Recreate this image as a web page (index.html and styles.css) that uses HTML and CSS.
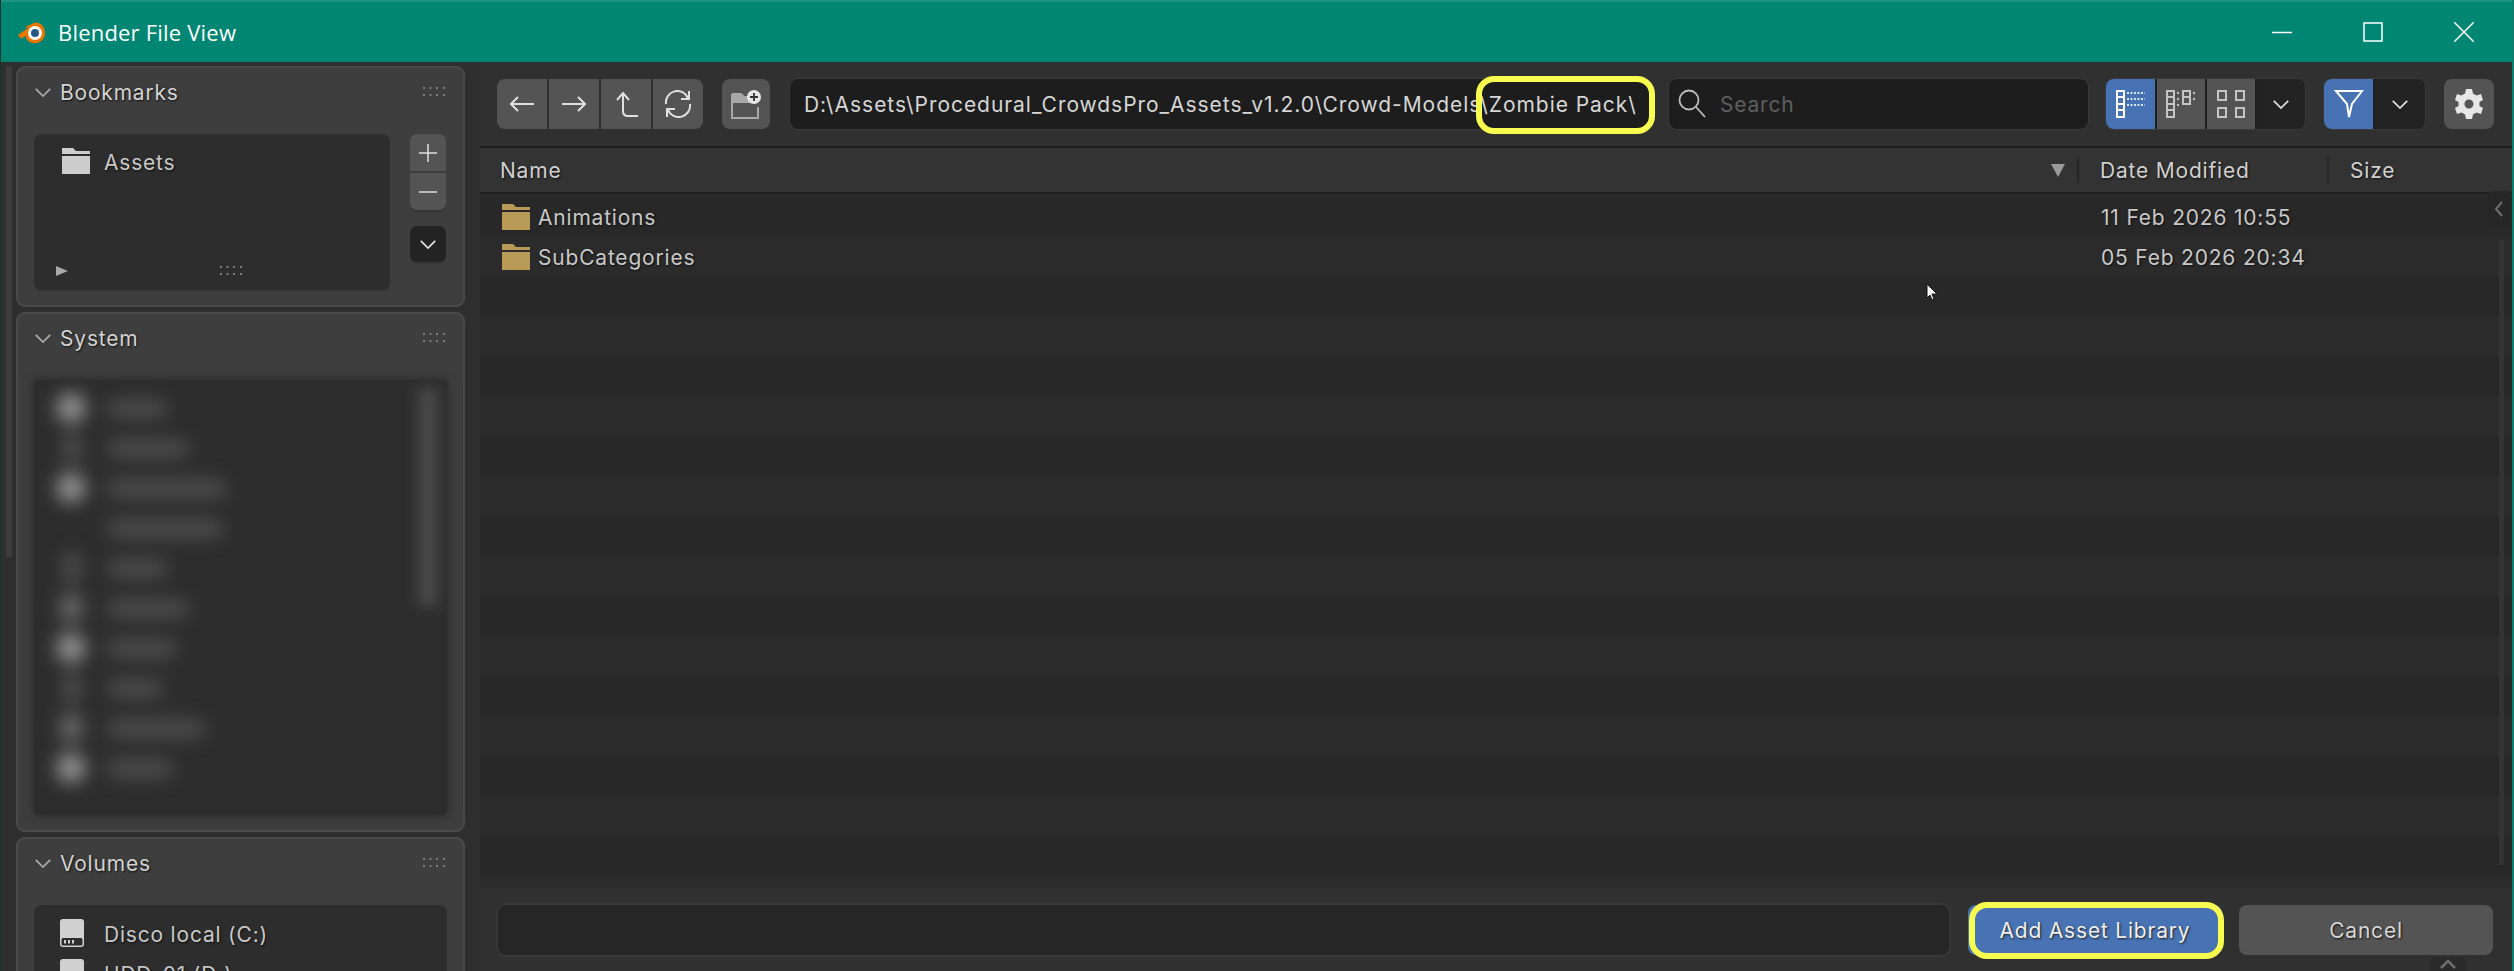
FILE: index.html
```html
<!DOCTYPE html>
<html lang="en">
<head>
<meta charset="utf-8">
<title>Blender File View</title>
<link rel="stylesheet" href="styles.css">
</head>
<body>
<svg class="sprites" width="0" height="0" aria-hidden="true">
  <symbol id="grip" viewBox="0 0 22 10"><g fill="#7c7c7c"><rect x="0" y="0" width="2" height="2"/><rect x="6.5" y="0" width="2" height="2"/><rect x="13" y="0" width="2" height="2"/><rect x="20" y="0" width="2" height="2"/><rect x="0" y="7" width="2" height="2"/><rect x="6.5" y="7" width="2" height="2"/><rect x="13" y="7" width="2" height="2"/><rect x="20" y="7" width="2" height="2"/></g></symbol>
  <symbol id="folder" viewBox="0 0 28 26"><path d="M0 0H11L14 3H28V6H0ZM0 8H28V26H0Z"/></symbol>
  <symbol id="chev" viewBox="0 0 20 12"><path d="M2 2L10 10L18 2" fill="none" stroke="currentColor" stroke-width="2"/></symbol>
</svg>
<div class="window">
  <header class="titlebar">
    <svg class="logo" viewBox="0 0 30 26" width="30" height="26">
      <path d="M1 16L11 9L8 8L17 4C23 2 28 8 28 14C28 21 22 25 16 24C12 23.500 9 21 9 17L4 19.500Z" fill="#ea7600"/>
      <circle cx="18" cy="14" r="7" fill="#fff"/>
      <circle cx="18" cy="14" r="4" fill="#265787"/>
    </svg>
    <span class="title">Blender File View</span>
    <div class="winctl">
      <svg viewBox="0 0 20 20" width="20" height="20"><path d="M0 10.500H20" stroke="#fff" stroke-width="1.500"/></svg>
      <svg viewBox="0 0 20 20" width="20" height="20"><rect x="1" y="1" width="18" height="18" fill="none" stroke="#fff" stroke-width="1.500"/></svg>
      <svg viewBox="0 0 20 20" width="20" height="20"><path d="M0 0L20 20M20 0L0 20" stroke="#fff" stroke-width="1.500"/></svg>
    </div>
  </header>
  <div class="content">
    <aside class="sidebar">
      <div class="side-scroll"></div>
      <section class="panel">
        <div class="panel-head">
          <svg class="p-chev"><use href="#chev"/></svg>
          <span class="panel-title">Bookmarks</span>
          <svg class="grip"><use href="#grip"/></svg>
        </div>
        <div class="book-body">
          <div class="list book-list">
            <div class="side-row">
              <svg class="side-folder"><use href="#folder"/></svg>
              <span>Assets</span>
            </div>
            <div class="book-foot">
              <svg class="tri" viewBox="0 0 12 10" width="12" height="10"><path d="M0 0L12 5L0 10Z" fill="#a8a8a8"/></svg>
              <svg class="grip"><use href="#grip"/></svg>
            </div>
          </div>
          <div class="book-side">
            <div class="pm">
              <button class="pm-btn"><svg viewBox="0 0 18 18" width="18" height="18"><path d="M9 0V18M0 9H18" stroke="#e0e0e0" stroke-width="1.500"/></svg></button>
              <button class="pm-btn"><svg viewBox="0 0 18 18" width="18" height="18"><path d="M0 9H18" stroke="#e0e0e0" stroke-width="1.500"/></svg></button>
            </div>
            <button class="pm-drop"><svg class="m-chev"><use href="#chev"/></svg></button>
          </div>
        </div>
      </section>
      <section class="panel">
        <div class="panel-head">
          <svg class="p-chev"><use href="#chev"/></svg>
          <span class="panel-title">System</span>
          <svg class="grip"><use href="#grip"/></svg>
        </div>
        <div class="list sys-list">
          <div class="blurred">
            <div class="b-row"><i class="b-ico hi"></i><i class="b-lab w58"></i></div>
            <div class="b-row"><i class="b-ico lo"></i><i class="b-lab w80"></i></div>
            <div class="b-row"><i class="b-ico hi"></i><i class="b-lab w118"></i></div>
            <div class="b-row"><i class="b-ico none"></i><i class="b-lab w114"></i></div>
            <div class="b-row"><i class="b-ico lo"></i><i class="b-lab w58"></i></div>
            <div class="b-row"><i class="b-ico mid"></i><i class="b-lab w80"></i></div>
            <div class="b-row"><i class="b-ico hi"></i><i class="b-lab w68"></i></div>
            <div class="b-row"><i class="b-ico lo"></i><i class="b-lab w54"></i></div>
            <div class="b-row"><i class="b-ico mid"></i><i class="b-lab w96"></i></div>
            <div class="b-row"><i class="b-ico hi"></i><i class="b-lab w64"></i></div>
          </div>
          <div class="b-scroll"></div>
        </div>
      </section>
      <section class="panel">
        <div class="panel-head">
          <svg class="p-chev"><use href="#chev"/></svg>
          <span class="panel-title">Volumes</span>
          <svg class="grip"><use href="#grip"/></svg>
        </div>
        <div class="list vol-list">
          <div class="side-row">
            <svg class="disk" viewBox="0 0 24 28"><path fill-rule="evenodd" d="M3 0H21A3 3 0 0 1 24 3V25A3 3 0 0 1 21 28H3A3 3 0 0 1 0 25V3A3 3 0 0 1 3 0ZM3 19A1.500 1.500 0 0 0 1.500 20.500V25A1.500 1.500 0 0 0 3 26.500H21A1.500 1.500 0 0 0 22.500 25V20.500A1.500 1.500 0 0 0 21 19ZM4 21H6V24.500H4ZM8 21H10V24.500H8ZM12 21H14V24.500H12Z"/></svg>
            <span>Disco local (C:)</span>
          </div>
          <div class="side-row">
            <svg class="disk" viewBox="0 0 24 28"><path fill-rule="evenodd" d="M3 0H21A3 3 0 0 1 24 3V25A3 3 0 0 1 21 28H3A3 3 0 0 1 0 25V3A3 3 0 0 1 3 0Z"/></svg>
            <span>HDD-01 (D:)</span>
          </div>
        </div>
      </section>
    </aside>
    <main class="main">
      <div class="toolbar">
        <div class="nav">
          <button class="tool"><svg viewBox="0 0 26 20" width="26" height="20"><path d="M25 10H2M9 3L2 10L9 17" class="ln"/></svg></button>
          <button class="tool"><svg viewBox="0 0 26 20" width="26" height="20"><path d="M1 10H24M17 3L24 10L17 17" class="ln"/></svg></button>
          <button class="tool"><svg viewBox="0 0 24 26" width="24" height="26"><path d="M3 9L9 2L15 9M9 2V20Q9 25 14 25H24" class="ln"/></svg></button>
          <button class="tool"><svg viewBox="0 0 28 28" width="28" height="28"><path d="M2 14A11.500 11.500 0 0 1 24 8M26 14A11.500 11.500 0 0 1 4 20M25 1V9H17M3 27V19H11" class="ln"/></svg></button>
        </div>
        <button class="tool newdir"><svg viewBox="0 0 30 29" width="30" height="29"><path d="M1 4H10L13 7H22M1 4V28H27V17" fill="none" stroke="#a8a8a8" stroke-width="2"/><path d="M1 4H10L13 8H20V13H1Z" fill="#a8a8a8"/><circle cx="23" cy="7" r="7" fill="#e6e6e6"/><path d="M23 3V11M19 7H27" stroke="#333" stroke-width="1.800"/></svg></button>
        <div class="field path">
          <span>D:\Assets\Procedural_CrowdsPro_Assets_v1.2.0\Crowd-Models\Zombie Pack\</span>
          <div class="mark mark-path"></div>
        </div>
        <div class="field search">
          <svg viewBox="0 0 28 30" width="28" height="30"><circle cx="11" cy="11" r="9.500" fill="none" stroke="#bdbdbd" stroke-width="1.800"/><path d="M18 18L27 28" stroke="#bdbdbd" stroke-width="1.800"/></svg>
          <span>Search</span>
        </div>
        <div class="group view">
          <button class="seg seg-on"><svg viewBox="0 0 30 28" width="30" height="28"><g fill="none" stroke="#fff" stroke-width="2"><rect x="1" y="1" width="7" height="6"/><rect x="1" y="7" width="7" height="7"/><rect x="1" y="14" width="7" height="6"/><rect x="1" y="20" width="7" height="7"/></g><path d="M11 3H29M11 9H29M11 15H29" stroke="#dbe5f4" stroke-width="2" stroke-dasharray="2 1.500"/></svg></button>
          <button class="seg"><svg viewBox="0 0 30 28" width="30" height="28"><g fill="none" stroke="#c4c4c4" stroke-width="2"><rect x="1" y="1" width="7" height="6"/><rect x="1" y="7" width="7" height="7"/><rect x="1" y="14" width="7" height="6"/><rect x="1" y="20" width="7" height="7"/><rect x="17" y="1" width="7" height="6"/><rect x="17" y="7" width="7" height="7"/></g><path d="M11 3H14M11 9H14M11 15H14M27 3H30M27 9H30" stroke="#c4c4c4" stroke-width="2" stroke-dasharray="2 1.500"/></svg></button>
          <button class="seg"><svg viewBox="0 0 28 28" width="28" height="28"><g fill="none" stroke="#c4c4c4" stroke-width="2"><rect x="1" y="1" width="8" height="9"/><rect x="19" y="1" width="8" height="9"/><rect x="1" y="18" width="8" height="9"/><rect x="19" y="18" width="8" height="9"/></g></svg></button>
          <button class="seg seg-drop"><svg class="m-chev"><use href="#chev"/></svg></button>
        </div>
        <div class="group filter">
          <button class="seg seg-on"><svg viewBox="0 0 30 30" width="30" height="30"><path d="M2 2H28L18 15L15 28L13 15Z" fill="none" stroke="#fff" stroke-width="2"/></svg></button>
          <button class="seg seg-drop"><svg class="m-chev"><use href="#chev"/></svg></button>
        </div>
        <button class="tool gear"><svg viewBox="0 0 28 30" width="28" height="30"><path fill="#e6e6e6" fill-rule="evenodd" d="M11 0H17L18 4.500L21.500 6.500L26 5L28 11L24.500 13V17L28 19L26 25L21.500 23.500L18 25.500L17 30H11L10 25.500L6.500 23.500L2 25L0 19L3.500 17V13L0 11L2 5L6.500 6.500L10 4.500ZM14 10.500A4.500 4.500 0 1 0 14 19.500A4.500 4.500 0 1 0 14 10.500Z"/></svg></button>
      </div>
      <div class="columns">
        <div class="col col-name"><span>Name</span><svg viewBox="0 0 14 13" width="14" height="13"><path d="M0 0H14L7 13Z" fill="#9a9a9a"/></svg></div>
        <div class="col col-date"><span>Date Modified</span></div>
        <div class="col col-size"><span>Size</span></div>
      </div>
      <div class="files">
        <div class="file">
          <svg class="file-folder"><use href="#folder"/></svg>
          <span class="file-name">Animations</span>
          <span class="file-date">11 Feb 2026 10:55</span>
        </div>
        <div class="file">
          <svg class="file-folder"><use href="#folder"/></svg>
          <span class="file-name">SubCategories</span>
          <span class="file-date">05 Feb 2026 20:34</span>
        </div>
        <div class="region-tab"><svg viewBox="0 0 10 16" width="10" height="16"><path d="M8 1L2 8L8 15" fill="none" stroke="#6e6e6e" stroke-width="2"/></svg></div>
        <div class="file-scroll"></div>
        <svg class="cursor" viewBox="0 0 12 18" width="12" height="18"><path d="M1 1V15L4 12L6 17L8 16L6 11H11Z" fill="#fff" stroke="#111" stroke-width="1"/></svg>
      </div>
      <div class="footer">
        <div class="field name-input"></div>
        <button class="act act-add">Add Asset Library<span class="mark mark-add"></span></button>
        <button class="act act-cancel">Cancel</button>
        <div class="foot-tab"><svg viewBox="0 0 16 10" width="16" height="10"><path d="M1 9L8 2L15 9" fill="none" stroke="#6e6e6e" stroke-width="2.500"/></svg></div>
      </div>
    </main>
  </div>
</div>
</body>
</html>
```
FILE: styles.css
```css
* { box-sizing: border-box; }
html, body { margin: 0; height: 100%; overflow: hidden; background: #2e2e2e; }
body { font-family: Inter, "Noto Sans", sans-serif; font-size: 21px; letter-spacing: .8px; color: #cfcfcf; }
button { font: inherit; letter-spacing: inherit; color: inherit; border: 0; padding: 0; margin: 0; display: flex; align-items: center; justify-content: center; }
.sprites { position: absolute; }

.window { height: 971px; width: 2514px; display: flex; flex-direction: column; border-left: 1px solid #12352f; border-right: 2px solid #0b7f6c; overflow: hidden; }

.titlebar { height: 62px; flex: none; background: #008672; border-top: 2px solid #1e9383; display: flex; align-items: center; padding-left: 17px; margin-left: -1px; margin-right: -2px; }
.logo { flex: none; }
.title { margin-left: 11px; font-family: "Open Sans", sans-serif; font-size: 22px; letter-spacing: .2px; color: #fff; }
.winctl { margin-left: auto; display: flex; align-items: center; gap: 71px; padding-right: 40px; }

.content { flex: 1; min-height: 0; display: flex; }

.sidebar { width: 479px; flex: none; position: relative; background: #2e2e2e; padding: 4px 15px 0; display: flex; flex-direction: column; gap: 5px; }
.side-scroll { position: absolute; left: 5px; top: 4px; width: 6px; height: 491px; background: #3c3c3c; }
.panel { background: #3e3e3e; border-radius: 9px; box-shadow: inset 0 0 0 2px #4a4a4a; padding: 0 18px 17px; flex: none; }
.panel-head { height: 52px; margin-bottom: 16px; display: flex; align-items: center; }
.p-chev { width: 18px; height: 11px; color: #a8a8a8; flex: none; }
.panel-title { margin-left: 8px; color: #d2d2d2; text-shadow: 1px 1px 2px #111; }
.grip { width: 22px; height: 10px; flex: none; }
.panel-head .grip { margin-left: auto; margin-right: 2px; }

.list { background: #2d2d2d; border-radius: 8px; box-shadow: 0 2px 0 #383838; }
.book-body { display: flex; justify-content: space-between; }
.book-list { width: 356px; height: 156px; display: flex; flex-direction: column; justify-content: space-between; }
.side-row { height: 40px; display: flex; align-items: center; padding-left: 70px; color: #c8c8c8; text-shadow: 1px 1px 2px #111; position: relative; }
.side-row span { white-space: nowrap; }
.side-folder { position: absolute; left: 28px; top: 14px; width: 28px; height: 26px; fill: #cdcdcd; }
.side-row span { position: relative; top: 8px; }
.book-foot { display: flex; align-items: center; justify-content: space-between; height: 37px; padding: 0 148px 2px 22px; }
.book-side { width: 36px; margin-right: 1px; display: flex; flex-direction: column; gap: 16px; }
.pm { border-radius: 7px; overflow: hidden; display: flex; flex-direction: column; gap: 2px; box-shadow: 0 2px 0 #353535; }
.pm-btn { height: 37px; background: #545454; }
.pm-drop { height: 36px; background: #232323; border-radius: 7px; box-shadow: 0 2px 0 #353535; }
.m-chev { width: 18px; height: 11px; color: #dedede; }

.sys-list { height: 435px; position: relative; overflow: hidden; border-radius: 4px; box-shadow: 0 0 8px 2px #2f2f2f; }
.blurred { padding-top: 8px; filter: blur(9px); }
.b-row { height: 40px; display: flex; align-items: center; }
.b-ico { width: 30px; height: 30px; border-radius: 50%; margin-left: 22px; margin-right: -2px; flex: none; }
.hi { background: #919191; }
.mid { background: #686868; width: 24px; margin-left: 25px; margin-right: 1px; }
.lo { background: #505050; width: 18px; height: 34px; margin-left: 29px; margin-right: 3px; }
.none { background: transparent; }
.b-lab { height: 17px; margin-left: 24px; background: #505050; border-radius: 6px; }
.w54 { width: 54px; } .w58 { width: 58px; } .w64 { width: 64px; } .w68 { width: 68px; } .w80 { width: 80px; } .w96 { width: 96px; } .w114 { width: 114px; } .w118 { width: 118px; }
.b-scroll { position: absolute; left: 384px; top: 8px; width: 20px; height: 218px; background: #4a4a4a; filter: blur(7px); }

.vol-list { height: 140px; }
.vol-list .side-row span { top: 9px; }
.disk { position: absolute; left: 26px; top: 14px; width: 24px; height: 28px; fill: #d0d0d0; }

.main { flex: 1; min-width: 0; display: flex; flex-direction: column; background: #303030; }
.toolbar { height: 84px; flex: none; display: flex; align-items: flex-start; padding: 17px 0 0 17px; background: #303030; box-shadow: 0 2px 0 #1e1e1e; position: relative; z-index: 1; }
.nav { display: flex; gap: 2px; border-radius: 8px; overflow: hidden; flex: none; }
.tool { width: 50px; height: 50px; background: #545454; flex: none; }
.ln { fill: none; stroke: #e0e0e0; stroke-width: 2; }
.newdir { margin-left: 19px; border-radius: 8px; width: 48px; }
.field { background: #1d1d1d; border-radius: 8px; box-shadow: 0 0 0 1px #3a3a3a; position: relative; flex: none; }
.path { margin-left: 20px; width: 860px; height: 50px; display: flex; align-items: center; padding-left: 14px; color: #d6d6d6; white-space: nowrap; letter-spacing: .95px; }
.mark { position: absolute; border: 6px solid #f8fc4e; border-radius: 18px; pointer-events: none; }
.mark-path { left: 686px; top: -3px; width: 179px; height: 58px; }
.search { margin-left: 19px; width: 419px; height: 50px; display: flex; align-items: center; padding-left: 9px; color: #5e5e5e; gap: 14px; }
.group { display: flex; gap: 2px; height: 50px; border-radius: 8px; overflow: hidden; background: #1f1f1f; box-shadow: 0 0 0 1px #3a3a3a; flex: none; }
.view { margin-left: 18px; width: 199px; }
.filter { margin-left: 19px; width: 101px; }
.seg { width: 48px; height: 50px; background: #545454; flex: none; }
.seg-on { background: #4772b3; width: 49px; }
.seg-drop { background: #232323; flex: 1; }
.gear { margin-left: 19px; border-radius: 8px; }

.columns { height: 46px; flex: none; margin-top: 2px; display: flex; align-items: center; background: #333; border-bottom: 2px solid #1f1f1f; color: #d0d0d0; text-shadow: 1px 1px 2px #111; }
.col { display: flex; align-items: center; height: 26px; }
.col-name { width: 1597px; padding: 0 12px 0 20px; justify-content: space-between; box-shadow: 2px 0 0 #262626; }
.col-date { width: 250px; padding-left: 23px; box-shadow: 2px 0 0 #262626; }
.col-size { padding-left: 23px; }

.files { flex: 1; min-height: 0; position: relative; padding-top: 3px; background: repeating-linear-gradient(#282828 0 40px, #2b2b2b 40px 80px); background-position: 0 3px; }
.file { height: 40px; display: flex; align-items: center; padding-left: 22px; color: #c8c8c8; text-shadow: 1px 1px 2px #111; }
.file-folder { width: 28px; height: 26px; fill: #b69a56; flex: none; }
.file-name { margin-left: 8px; width: 1563px; }
.region-tab { position: absolute; right: 2px; top: -3px; width: 22px; height: 36px; background: #262626; border-radius: 6px 0 0 6px; display: flex; align-items: center; justify-content: center; }
.file-scroll { position: absolute; left: 2019px; top: 46px; width: 5px; height: 625px; background: #333; }
.cursor { position: absolute; left: 1446px; top: 89px; }

.footer { height: 83px; flex: none; display: flex; align-items: flex-start; gap: 17px; padding: 17px 19px 0 18px; position: relative; background: #303030; }
.name-input { flex: 1; height: 50px; background: #262626; box-shadow: 0 0 0 2px #383838; }
.act { width: 254px; height: 50px; border-radius: 8px; position: relative; flex: none; }
.act-add { background: #4772b3; color: #f0f0f0; margin-left: 2px; text-shadow: 1px 1px 2px #222; }
.mark-add { left: 1px; top: -3px; width: 255px; height: 57px; }
.act-cancel { background: #545454; color: #d6d6d6; text-shadow: 1px 1px 2px #111; }
.foot-tab { position: absolute; left: 1950px; bottom: 0; width: 36px; height: 14px; background: #2a2a2a; border-radius: 6px 6px 0 0; display: flex; align-items: center; justify-content: center; }
```
